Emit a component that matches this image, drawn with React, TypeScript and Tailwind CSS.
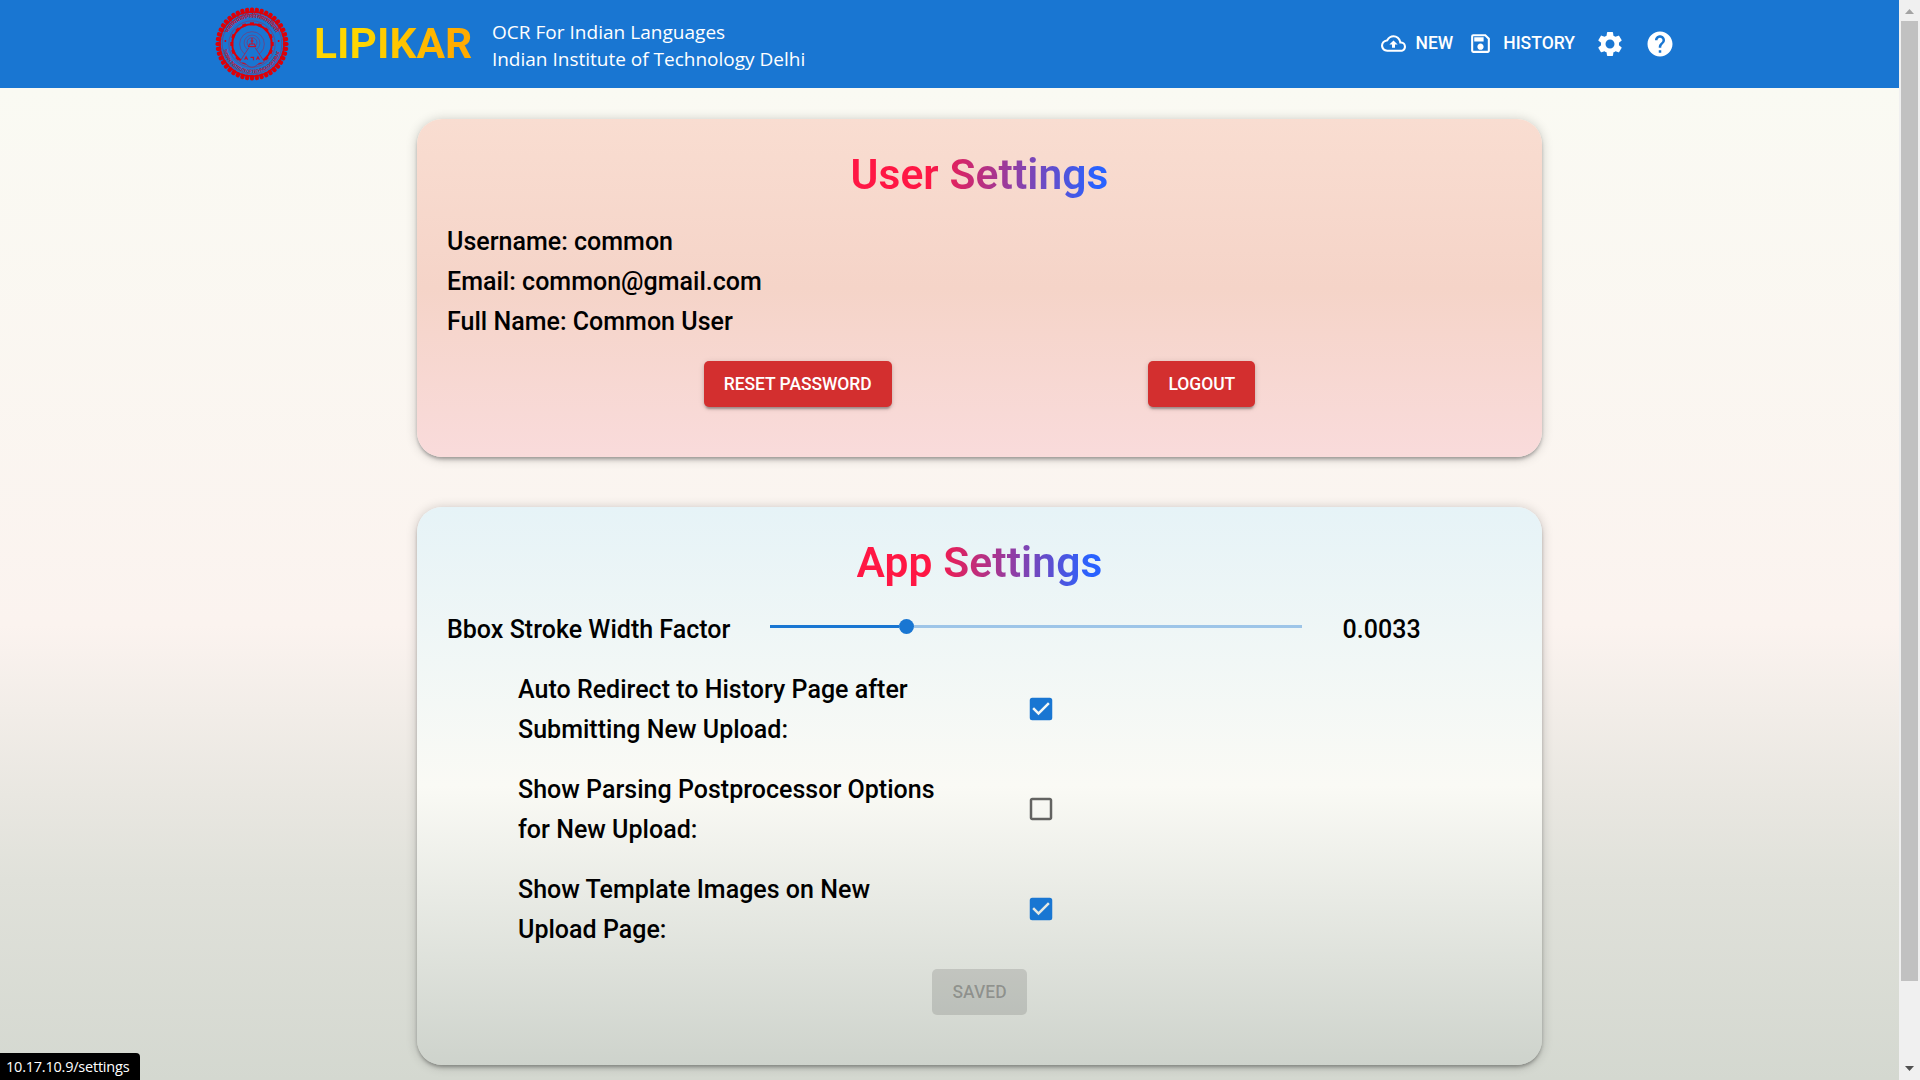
import React from "react";
import { MdOutlineBackup, MdOutlineSave, MdSettings, MdHelp, MdCheckBox, MdCheckBoxOutlineBlank } from "react-icons/md";

const beads = Array.from({ length: 44 }, (_, i) => (i * 360) / 44);
const teeth = Array.from({ length: 16 }, (_, i) => (i * 360) / 16);

function Emblem() {
  return (
    <svg viewBox="0 0 150 150" className="mb-px h-[74px] w-[74px] shrink-0" fill="none" stroke="#a5204c">
      {beads.map((a) => (
        <rect key={a} x="70.800" y="1" width="8.4" height="11" rx="3.5" fill="#dc0008" stroke="none" transform={`rotate(${a} 75 75)`} />
      ))}
      <circle cx="75" cy="75" r="65" stroke="#dc0008" strokeWidth="3" />
      <circle cx="75" cy="75" r="60.5" strokeWidth="1" />
      <circle cx="75" cy="75" r="47" strokeWidth="1.2" opacity="0.8" />
      <circle cx="75" cy="75" r="40" stroke="#dc0008" strokeWidth="4" />
      {teeth.map((a) => (
        <rect key={a} x="71" y="31" width="8" height="6" fill="#dc0008" stroke="none" transform={`rotate(${a} 75 75)`} />
      ))}
      <circle cx="75" cy="75" r="25" strokeWidth="1.3" opacity="0.8" />
      <circle cx="75" cy="73" r="16" strokeWidth="1.2" opacity="0.8" />
      <circle cx="75" cy="72" r="10" strokeWidth="1.2" />
      <path
        d="M69 82L50 111c4 4 8 1 12 4s6 7 13 7 9-4 13-7 8 0 12-4L81 82"
        fill="#1976d2"
        strokeWidth="1.6"
      />
      <path d="M68 80h14l-2-5h-10zM75 74v-11M72 69h6" strokeWidth="2.2" stroke="#c8102a" />
      <path d="M60 107l3-6 3 6M72 102h6v6M84 107l3-6 3 6" strokeWidth="2.4" stroke="#c8102a" />
      <circle cx="21" cy="69" r="2" fill="#dc0008" stroke="none" />
      <circle cx="129" cy="69" r="2" fill="#dc0008" stroke="none" />
      <defs>
        <path id="arcTop" d="M25.5 56A53 53 0 0 1 124.500 56" />
        <path id="arcBottom" d="M17.500 86A58.500 58.500 0 0 0 132.500 86" />
      </defs>
      <g fill="#b51a3c" stroke="none" className="font-['Noto_Sans',sans-serif] font-bold">
        <text fontSize="12">
          <textPath href="#arcTop" textLength="122">भारतीय प्रौद्योगिकी संस्थान दिल्ली</textPath>
        </text>
        <text fontSize="9">
          <textPath href="#arcBottom" textLength="157">INDIAN INSTITUTE OF TECHNOLOGY DELHI</textPath>
        </text>
      </g>
    </svg>
  );
}

function Header() {
  return (
    <header className="flex h-[88px] shrink-0 items-center bg-[#1976d2] pr-[224px] pl-[214.500px] text-white">
      <Emblem />
      <h1 className="ml-[25.500px] bg-linear-to-r/srgb from-[#ffd600] from-30% to-[#ffab00] to-90% bg-clip-text text-[42.5px] leading-[52.5px] font-bold tracking-[0.05px] text-transparent">
        LIPIKAR
      </h1>
      <div className="ml-[19.500px] pt-1 font-['Open_Sans',sans-serif] text-[19px] leading-[27px] whitespace-nowrap">
        <p className="tracking-[0.03px]">OCR For Indian Languages</p>
        <p>Indian Institute of Technology Delhi</p>
      </div>
      <nav className="ml-auto flex items-center pb-px text-[17.5px] font-medium">
        <a className="flex items-center gap-[10px]">
          <MdOutlineBackup className="size-[25px]" />
          NEW
        </a>
        <a className="ml-[15px] flex items-center gap-[10px]">
          <MdOutlineSave className="size-[25px]" />
          HISTORY
        </a>
        <MdSettings className="ml-5 size-[30px]" />
        <MdHelp className="ml-5 size-[30px]" />
      </nav>
    </header>
  );
}

function Card({ title, className, children }: { title: string; className: string; children: React.ReactNode }) {
  return (
    <section
      className={`flex w-[1125px] flex-col rounded-[25px] px-[30px] pt-[30px] pb-[50px] shadow-[0_4px_5px_-2px_rgba(0,0,0,0.2),0_2px_3px_0_rgba(0,0,0,0.14),0_1px_12px_0_rgba(0,0,0,0.2)] ${className}`}
    >
      <h2 className="mb-5 self-center bg-linear-to-r/srgb from-[#ff1744] from-30% to-[#2962ff] to-95% bg-clip-text text-[42.5px] leading-[52px] font-semibold tracking-[0.12px] text-transparent">
        {title}
      </h2>
      {children}
    </section>
  );
}

function Label({ className = "", children }: { className?: string; children: React.ReactNode }) {
  return <p className={`-mb-px pt-px ${className}`}>{children}</p>;
}

function DangerButton({ children }: { children: React.ReactNode }) {
  return (
    <button className="h-[46px] rounded-[5px] bg-[#d32f2f] px-5 text-[17.5px] font-medium tracking-[-0.06px] text-white shadow-[0_4px_2px_-2px_rgba(0,0,0,0.2),0_2px_3px_0_rgba(0,0,0,0.14),0_1px_6px_0_rgba(0,0,0,0.12)]">
      {children}
    </button>
  );
}

function Option({ lines, checked }: { lines: [string, string]; checked: boolean }) {
  return (
    <div className="mb-5 flex h-20 items-center pl-[71px]">
      <Label className="w-[508px]">
        {lines[0]}
        <br />
        {lines[1]}
      </Label>
      {checked ? <MdCheckBox className="size-[30px] text-[#1976d2]" /> : <MdCheckBoxOutlineBlank className="size-[30px] text-black/60" />}
    </div>
  );
}

export default function App() {
  return (
    <div className="relative flex h-[1080px] w-[1920px] overflow-hidden font-['Roboto',sans-serif] text-black">
      <div className="flex h-[1168px] w-[1899px] flex-col bg-[linear-gradient(to_bottom,#fafaf3_0px,#fafaf3_88px,#fbf3ef_625px,#e0e1da_880px,#d4d8d0_1080px,#d0d5ce_1168px)]">
        <Header />
        <main className="flex flex-col gap-[50px] pt-[31px] pl-[417px] text-[25px] leading-[40px] font-medium tracking-[0.02px]">
          <Card title="User Settings" className="bg-linear-to-b/srgb from-[#f9ddd1] via-[#f5d4c8] to-[#f9dbdb]">
            <Label>Username: common</Label>
            <Label>Email: common@gmail.com</Label>
            <Label>Full Name: Common User</Label>
            <div className="mt-5 flex justify-evenly">
              <DangerButton>RESET PASSWORD</DangerButton>
              <DangerButton>LOGOUT</DangerButton>
            </div>
          </Card>
          <Card title="App Settings" className="bg-linear-to-b/srgb from-[#e6f3f7] via-[#fafaf5] to-[#ced3cc]">
            <div className="mb-5 flex h-10 items-center">
              <Label className="w-[323px]">Bbox Stroke Width Factor</Label>
              <div className="mb-[5px] flex w-[532px] items-center">
                <div className="h-[2.5px] w-[128.500px] bg-[#1976d2]" />
                <div className="size-[15px] rounded-full bg-[#1976d2]" />
                <div className="h-[2.5px] flex-1 bg-[#1976d2]/38" />
              </div>
              <Label className="ml-[40.500px]">0.0033</Label>
            </div>
            <Option checked lines={["Auto Redirect to History Page after", "Submitting New Upload:"]} />
            <Option checked={false} lines={["Show Parsing Postprocessor Options", "for New Upload:"]} />
            <Option checked lines={["Show Template Images on New", "Upload Page:"]} />
            <button disabled className="h-[46px] w-[95px] self-center rounded-[5px] bg-black/12 text-[17.5px] font-medium text-black/26">
              SAVED
            </button>
          </Card>
        </main>
      </div>
      <aside className="flex h-[1080px] w-[21px] flex-col items-center bg-[#f0f0f0]">
        <svg viewBox="0 0 9 5" className="mt-[9px] h-[5px] w-[9px]" fill="#a3a3a3">
          <path d="M0 5L4.500 0L9 5z" />
        </svg>
        <div className="mt-[7px] h-[960px] w-[17px] bg-[#c1c1c1]" />
        <svg viewBox="0 0 9 5" className="mt-[85px] h-[5px] w-[9px]" fill="#505050">
          <path d="M0 0L4.500 5L9 0z" />
        </svg>
      </aside>
      <div className="absolute bottom-0 left-0 h-[27px] w-[140px] rounded-tr-[4px] bg-black pl-[6px] font-['Open_Sans',sans-serif] text-[14.5px] leading-[27px] tracking-[-0.22px] text-white">
        10.17.10.9/settings
      </div>
    </div>
  );
}
